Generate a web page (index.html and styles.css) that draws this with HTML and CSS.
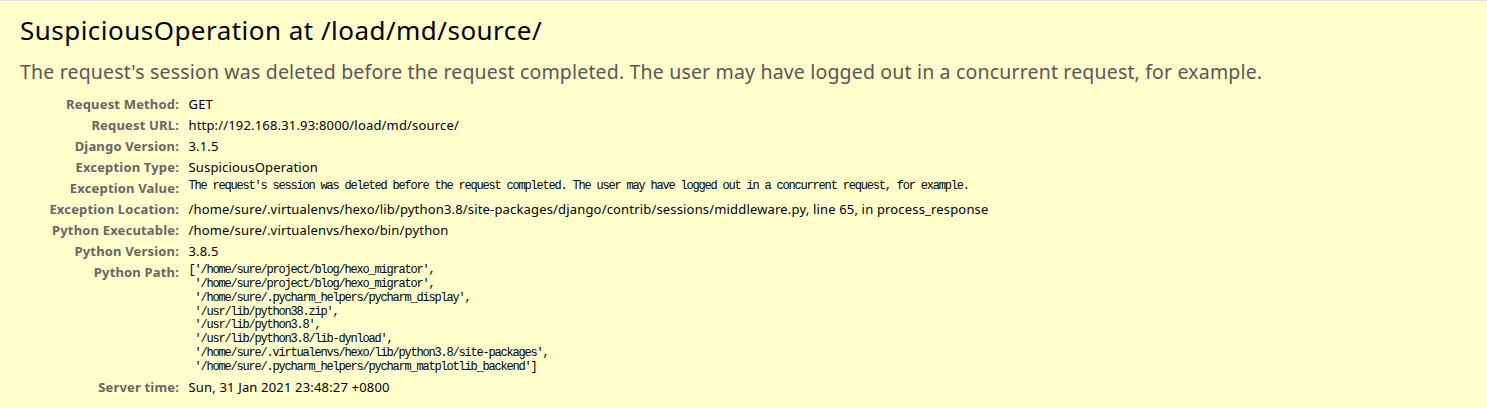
FILE: index.html
```html
<!DOCTYPE html>
<html>
<head>
<meta charset="utf-8">
<title>SuspiciousOperation at /load/md/source/</title>
<link rel="stylesheet" href="styles.css">
</head>
<body>
<div class="summary">
  <h1 class="title">SuspiciousOperation at /load/md/source/</h1>
  <pre class="exception-value">The request's session was deleted before the request completed. The user may have logged out in a concurrent request, for example.</pre>
  <table class="meta">
    <tr><th>Request Method:</th><td>GET</td></tr>
    <tr><th>Request URL:</th><td>http://192.168.31.93:8000/load/md/source/</td></tr>
    <tr><th>Django Version:</th><td>3.1.5</td></tr>
    <tr><th>Exception Type:</th><td>SuspiciousOperation</td></tr>
    <tr><th>Exception Value:</th><td><pre class="mono">The request's session was deleted before the request completed. The user may have logged out in a concurrent request, for example.</pre></td></tr>
    <tr><th>Exception Location:</th><td>/home/sure/.virtualenvs/hexo/lib/python3.8/site-packages/django/contrib/sessions/middleware.py, line 65, in process_response</td></tr>
    <tr><th>Python Executable:</th><td>/home/sure/.virtualenvs/hexo/bin/python</td></tr>
    <tr><th>Python Version:</th><td>3.8.5</td></tr>
    <tr><th>Python Path:</th><td><pre class="mono">['/home/sure/project/blog/hexo_migrator',
 '/home/sure/project/blog/hexo_migrator',
 '/home/sure/.pycharm_helpers/pycharm_display',
 '/usr/lib/python38.zip',
 '/usr/lib/python3.8',
 '/usr/lib/python3.8/lib-dynload',
 '/home/sure/.virtualenvs/hexo/lib/python3.8/site-packages',
 '/home/sure/.pycharm_helpers/pycharm_matplotlib_backend']</pre></td></tr>
    <tr><th>Server time:</th><td>Sun, 31 Jan 2021 23:48:27 +0800</td></tr>
  </table>
</div>
</body>
</html>
```
FILE: styles.css
```css
html, body { margin: 0; padding: 0; }
body {
  background: #ffc;
  color: #000;
  font-family: "Noto Sans", "Open Sans", sans-serif;
  font-size: 13px;
  letter-spacing: 0.17px;
}
.summary {
  background: #ffc;
  border-top: 1px solid #ddd;
  padding: 12px 20px 10px;
}
.title {
  margin: 0;
  font-size: 26px;
  font-weight: normal;
  line-height: 35px;
  letter-spacing: 0.47px;
}
.exception-value {
  margin: 11px 0 9px 0;
  font-family: "Noto Sans", "Open Sans", sans-serif;
  font-size: 19.5px;
  line-height: 26px;
  color: #575757;
  white-space: pre-wrap;
}
.meta {
  border: none;
  border-collapse: collapse;
  width: 100%;
  background: transparent;
}
.meta th, .meta td {
  vertical-align: top;
  padding: 2px 3px;
  line-height: 17px;
}
.meta th {
  width: 156px;
  text-align: right;
  color: #666;
  font-weight: bold;
  padding-right: 6.5px;
  white-space: nowrap;
}
.meta td { color: #000; }
.mono {
  margin: 0;
  font-family: "Liberation Mono", "DejaVu Sans Mono", monospace;
  font-size: 12px;
  letter-spacing: -1.2px;
  line-height: 13.85px;
  white-space: pre-wrap;
  color: #000;
}
```
